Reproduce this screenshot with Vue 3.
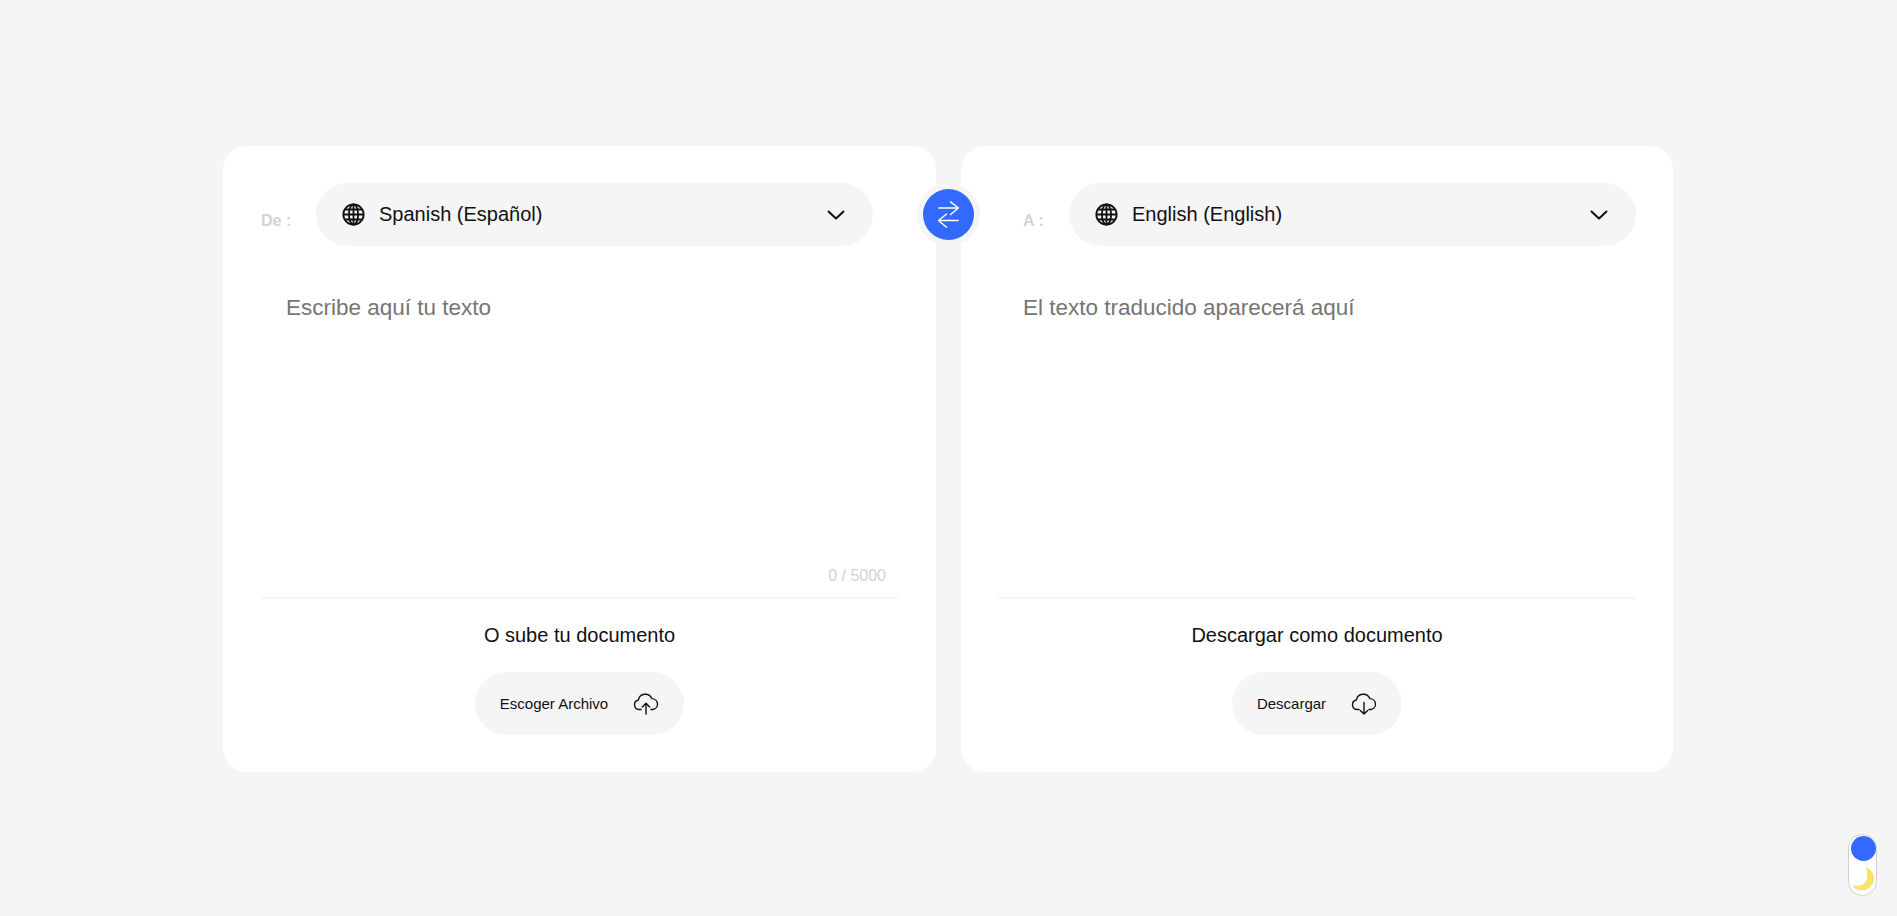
<script setup>
const panels = [
  {
    label: 'De :',
    lang: 'Spanish (Español)',
    hint: 'Escribe aquí tu texto',
    count: '0 / 5000',
    title: 'O sube tu documento',
    action: 'Escoger Archivo',
    upload: true
  },
  {
    label: 'A :',
    lang: 'English (English)',
    hint: 'El texto traducido aparecerá aquí',
    title: 'Descargar como documento',
    action: 'Descargar',
    upload: false
  }
]
</script>

<template>
  <div class="page">
    <div class="translator">
      <section v-for="p in panels" :key="p.label" class="card">
        <div class="head">
          <span class="label">{{ p.label }}</span>
          <div class="select">
            <svg class="globe" viewBox="0 0 24 24" fill="none" stroke="#111" stroke-width="1.9">
              <circle cx="12" cy="12" r="10.6" />
              <ellipse cx="12" cy="12" rx="4.800" ry="10.6" />
              <path d="M12 1.400v21.200M1.400 12h21.200M3.200 6.800h17.600M3.200 17.200h17.600" />
            </svg>
            <span class="lang">{{ p.lang }}</span>
            <svg class="chev" viewBox="0 0 18 10" fill="none" stroke="#111" stroke-width="2" stroke-linecap="round" stroke-linejoin="round">
              <path d="M1.500 1.500 9 8.500l7.500-7" />
            </svg>
          </div>
        </div>
        <div class="body">
          <div class="hint">{{ p.hint }}</div>
          <div class="count">{{ p.count }}</div>
        </div>
        <div class="foot">
          <div class="title">{{ p.title }}</div>
          <button class="action">
            <span>{{ p.action }}</span>
            <svg class="cloud" viewBox="0 0 26 22" fill="none" stroke="#111" stroke-width="1.4" stroke-linecap="round" stroke-linejoin="round">
              <path d="M8 16.500H6a4.800 4.800 0 0 1-.6-9.500A7 7 0 0 1 18.800 5.600 5.500 5.500 0 0 1 20 16.500h-2" />
              <path v-if="p.upload" d="M13 21V10.500M9.300 14 13 10.300l3.700 3.700" />
              <path v-else d="M13 9.500V21M9.300 17.400 13 21l3.700-3.600" />
            </svg>
          </button>
        </div>
      </section>
      <div class="swap">
        <svg viewBox="0 0 21 27" fill="none" stroke="#fff" stroke-width="1.500" stroke-linecap="round" stroke-linejoin="round">
          <path d="M.8 7h19.700M12.500.8l8 6.200-8 6.500" />
          <path d="M20.200 19.500H.6M8.500 13l-8 6.500 8 6.700" />
        </svg>
      </div>
    </div>
    <div class="toggle">
      <span class="knob"></span>
      <svg class="moon" viewBox="0 0 24 24">
        <path d="M14.500 .8c6 3 8.500 9 6.500 14.500-2 5.500-8 8.500-14 7.500-2.500-.5-4.800-2-6.200-4 5.500 1.200 10.200 0 12.700-3.300 2.700-3.600 2.900-9.500 1-14.700Z" fill="#fbe36b" stroke="#f3d550" stroke-width=".6" />
      </svg>
    </div>
  </div>
</template>

<style>
body {
  background: #f5f5f5;
}
</style>

<style scoped>
.page {
  position: relative;
  height: 916px;
  overflow: hidden;
  padding-top: 146px;
  box-sizing: border-box;
  font-family: "Liberation Sans", Arial, sans-serif;
  background: #f5f5f5;
  color: #111;
}
.translator {
  position: relative;
  width: 1450px;
  margin-left: 223px;
  display: flex;
  gap: 25px;
}
.card {
  width: 713px;
  height: 626px;
  box-sizing: border-box;
  padding: 37px 38px;
  background: #fff;
  border-radius: 24px;
  display: flex;
  flex-direction: column;
}
.card + .card {
  width: 712px;
  padding: 37px;
}
.head {
  display: flex;
  align-items: center;
  gap: 25px;
}
.card + .card .head {
  gap: 16px;
}
.label {
  width: 30px;
  margin-top: 12px;
  font-size: 16px;
  font-weight: 700;
  color: #d2d2d6;
  white-space: nowrap;
}
.card + .card .label {
  margin-left: 25px;
}
.select {
  flex: 1;
  height: 63px;
  margin-right: 25px;
  padding: 0 28px 0 26px;
  display: flex;
  align-items: center;
  background: #f5f5f5;
  border-radius: 32px;
}
.card + .card .select {
  margin-right: 0;
}
.globe {
  width: 23px;
  height: 23px;
  margin-right: 14px;
}
.lang {
  flex: 1;
  font-size: 20px;
  color: #111;
}
.chev {
  width: 18px;
  height: 10px;
}
.body {
  flex: 1;
  display: flex;
  flex-direction: column;
  justify-content: space-between;
  padding: 48px 12px 12px 25px;
  border-bottom: 2px solid #f5f5f5;
}
.hint {
  font-size: 22.500px;
  line-height: 28px;
  color: #757575;
}
.count {
  min-height: 18px;
  font-size: 16px;
  line-height: 18px;
  text-align: right;
  color: #d2d2d6;
}
.foot {
  display: flex;
  flex-direction: column;
  align-items: center;
  padding-top: 24px;
}
.title {
  font-size: 20px;
  line-height: 24px;
  color: #111;
}
.action {
  height: 63px;
  margin-top: 25px;
  padding: 0 25px;
  display: flex;
  align-items: center;
  gap: 25px;
  border: 0;
  border-radius: 32px;
  background: #f5f5f5;
  font: inherit;
  font-size: 15px;
  color: #111;
}
.cloud {
  width: 26px;
  height: 22px;
}
.swap {
  position: absolute;
  left: 700px;
  top: 43px;
  width: 51px;
  height: 51px;
  display: flex;
  align-items: center;
  justify-content: center;
  background: #3369ff;
  border-radius: 50%;
  box-shadow: 0 0 0 6px #f5f5f5;
}
.swap svg {
  width: 21px;
  height: 27px;
}
.toggle {
  position: absolute;
  left: 1848px;
  top: 834px;
  width: 29px;
  height: 62px;
  box-sizing: border-box;
  padding: 1px 0 0 2px;
  display: flex;
  flex-direction: column;
  align-items: center;
  background: #fff;
  border: 1px solid #cfcfd3;
  border-radius: 15px;
}
.knob {
  width: 25px;
  height: 25px;
  flex: none;
  background: #3369ff;
  border-radius: 50%;
}
.moon {
  width: 24px;
  height: 24px;
  flex: none;
  margin-top: 6px;
}
</style>
